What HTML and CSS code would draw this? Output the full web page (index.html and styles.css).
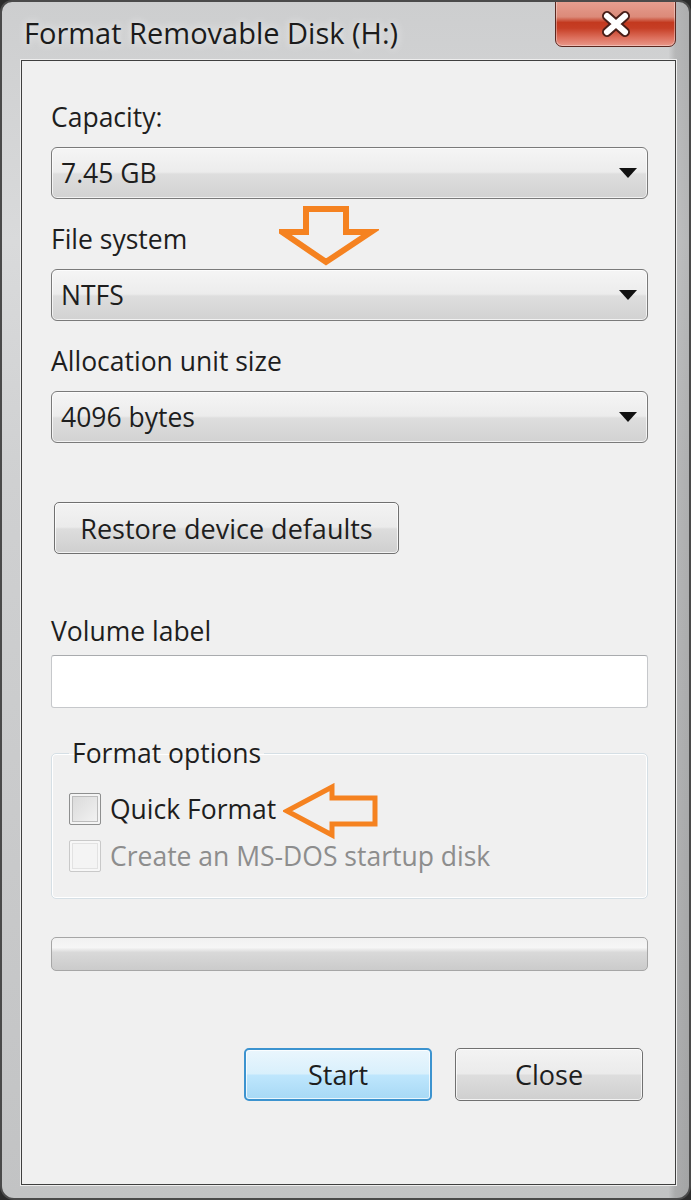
FILE: index.html
```html
<!DOCTYPE html>
<html lang="en">
<head>
  <meta charset="UTF-8">
  <title>Format Removable Disk (H:)</title>
  <link rel="stylesheet" href="styles.css">
</head>
<body>
  <div class="window">
    <div class="titlebar">
      <span class="title">Format Removable Disk (H:)</span>
      <button class="close-x" title="Close">
        <svg width="34" height="28" viewBox="0 0 34 28">
          <path d="M8 6 L26 22 M26 6 L8 22" stroke="#4a1f19" stroke-width="10" stroke-linecap="round"/>
          <path d="M8 6 L26 22 M26 6 L8 22" stroke="#ffffff" stroke-width="6" stroke-linecap="round"/>
        </svg>
      </button>
    </div>

    <div class="client">
      <div class="field">
        <label>Capacity:</label>
        <div class="combo"><span>7.45 GB</span><i class="caret"></i></div>
      </div>
      <div class="field">
        <label>File system</label>
        <div class="combo"><span>NTFS</span><i class="caret"></i></div>
      </div>
      <div class="field">
        <label>Allocation unit size</label>
        <div class="combo"><span>4096 bytes</span><i class="caret"></i></div>
      </div>

      <button class="btn restore">Restore device defaults</button>

      <div class="field volume">
        <label>Volume label</label>
        <div class="textbox"></div>
      </div>

      <fieldset class="options">
        <legend>Format options</legend>
        <div class="check"><span class="box"></span>Quick Format</div>
        <div class="check disabled"><span class="box"></span>Create an MS-DOS startup disk</div>
      </fieldset>

      <div class="progress"></div>

      <div class="actions">
        <button class="btn start">Start</button>
        <button class="btn">Close</button>
      </div>
    </div>

    <!-- orange hint arrows drawn on top of the dialog -->
    <svg class="hint hint-down" width="100" height="64" viewBox="0 0 100 64">
      <path d="M27 4 H67 V27 H92 L47 57 L3 27 H27 Z" fill="none" stroke="#f58220" stroke-width="6" stroke-linejoin="miter"/>
    </svg>
    <svg class="hint hint-left" width="100" height="58" viewBox="0 0 100 58">
      <path d="M4 28 L49 4 V15 H92 V41 H49 V52 Z" fill="none" stroke="#f58220" stroke-width="5" stroke-linejoin="miter"/>
    </svg>
  </div>
</body>
</html>
```

FILE: styles.css
```css
body {
  margin: 0;
  background: #2b2b2b;
  font-family: "Open Sans", "Noto Sans", sans-serif;
}

.window {
  position: relative;
  width: 691px;
  height: 1200px;
  box-sizing: border-box;
  border: 2px solid #4a4a4a;
  border-radius: 12px 12px 14px 14px;
  background:
    linear-gradient(90deg, transparent 0%, transparent 97%, rgba(0,0,0,0.12) 98%, rgba(0,0,0,0.16) 100%),
    linear-gradient(180deg, #cdcecf 0%, #d9dadb 20%, #cfd0d1 40%, #c2c3c4 100%);
  overflow: hidden;
}

.titlebar {
  display: flex;
  align-items: flex-start;
  height: 58px;
  padding-left: 22px;
}

.title {
  margin-top: 11px;
  font-size: 29px;
  color: #1b1b1b;
  text-shadow: 0 0 8px rgba(255,255,255,0.9);
}

.close-x {
  margin-left: auto;
  margin-right: 13px;
  margin-top: -4px;
  width: 121px;
  height: 49px;
  padding: 0;
  border: 1px solid #5b2820;
  border-radius: 0 0 7px 7px;
  background: linear-gradient(180deg, #e7a294 0%, #dc8a79 38%, #c3391f 50%, #c63e25 62%, #dc6e5b 82%, #e9988a 100%);
  box-shadow: inset 0 0 0 1px rgba(255,255,255,0.35);
  display: flex;
  align-items: center;
  justify-content: center;
}

.close-x svg {
  margin-top: 2px;
}

.client {
  margin-left: 19px;
  width: 655px;
  height: 1125px;
  box-sizing: border-box;
  border: 1px solid #3f3f3f;
  box-shadow: 0 0 0 1px #eeeeee;
  background: #f0f0f0;
  padding: 39px 27px 0 29px;
  font-size: 26.5px;
  color: #1e1e1e;
}

.field {
  display: flex;
  flex-direction: column;
  gap: 13px;
  margin-bottom: 23px;
}

.field label {
  line-height: 34px;
}

.combo {
  display: flex;
  align-items: center;
  height: 52px;
  box-sizing: border-box;
  padding: 0 10px 0 9px;
  border: 1px solid #7a7a7a;
  border-radius: 6px;
  background: linear-gradient(180deg, #f5f5f5 0%, #ececec 48%, #dedede 52%, #d2d2d2 100%);
  box-shadow: inset 0 0 0 1px rgba(255,255,255,0.7);
}

.caret {
  margin-left: auto;
  width: 0;
  height: 0;
  border-left: 9px solid transparent;
  border-right: 9px solid transparent;
  border-top: 10px solid #111;
}

.btn {
  font-family: inherit;
  font-size: 27px;
  color: #1e1e1e;
  height: 52px;
  border: 1px solid #707070;
  border-radius: 5px;
  background: linear-gradient(180deg, #f3f3f3 0%, #ebebeb 48%, #dddddd 52%, #cfcfcf 100%);
  box-shadow: inset 0 0 0 1px rgba(255,255,255,0.75);
}

.restore {
  display: block;
  width: 345px;
  margin: 59px 0 0 3px;
}

.volume {
  margin-top: 60px;
  gap: 7px;
  margin-bottom: 0;
}

.textbox {
  height: 51px;
  background: #ffffff;
  border: 1px solid #c6c8cb;
  border-top-color: #a9abae;
  border-radius: 3px;
}

.options {
  margin: 28px 0 0;
  padding: 15px 17px 19px;
  border: 1px solid #d5dfe5;
  border-radius: 5px;
  box-shadow: inset 0 0 0 1px #ffffff;
}

.options legend {
  padding: 0 3px;
  line-height: 34px;
}

.check {
  display: flex;
  align-items: center;
  gap: 9px;
  height: 47px;
}

.box {
  width: 30px;
  height: 30px;
  border: 1px solid #8e8f8f;
  border-radius: 2px;
  background: linear-gradient(135deg, #d8d8d8, #f4f4f4);
  box-shadow: inset 0 0 0 2px #f4f4f4, inset 0 0 0 3px #bcbcbc;
}

.check.disabled {
  color: #8d8d8d;
}

.check.disabled .box {
  border-color: #c9c9c9;
  background: #f4f4f4;
  box-shadow: inset 0 0 0 2px #f7f7f7, inset 0 0 0 3px #e2e2e2;
}

.progress {
  margin-top: 38px;
  height: 32px;
  border: 1px solid #a6a6a6;
  border-radius: 5px;
  background: linear-gradient(180deg, #f1f1f1 0%, #f6f6f6 30%, #d9d9d9 45%, #cbcbcb 100%);
}

.actions {
  display: flex;
  justify-content: flex-end;
  gap: 23px;
  margin-top: 77px;
  padding-right: 5px;
}

.actions .btn {
  width: 188px;
  height: 53px;
}

.actions .start {
  border: 2px solid #3c93cf;
  background: linear-gradient(180deg, #eaf6fd 0%, #d9f0fc 48%, #bee6fd 52%, #a7d9f5 100%);
}

.hint {
  position: absolute;
}

.hint-down {
  left: 277px;
  top: 203px;
}

.hint-left {
  left: 281px;
  top: 781px;
}
```
